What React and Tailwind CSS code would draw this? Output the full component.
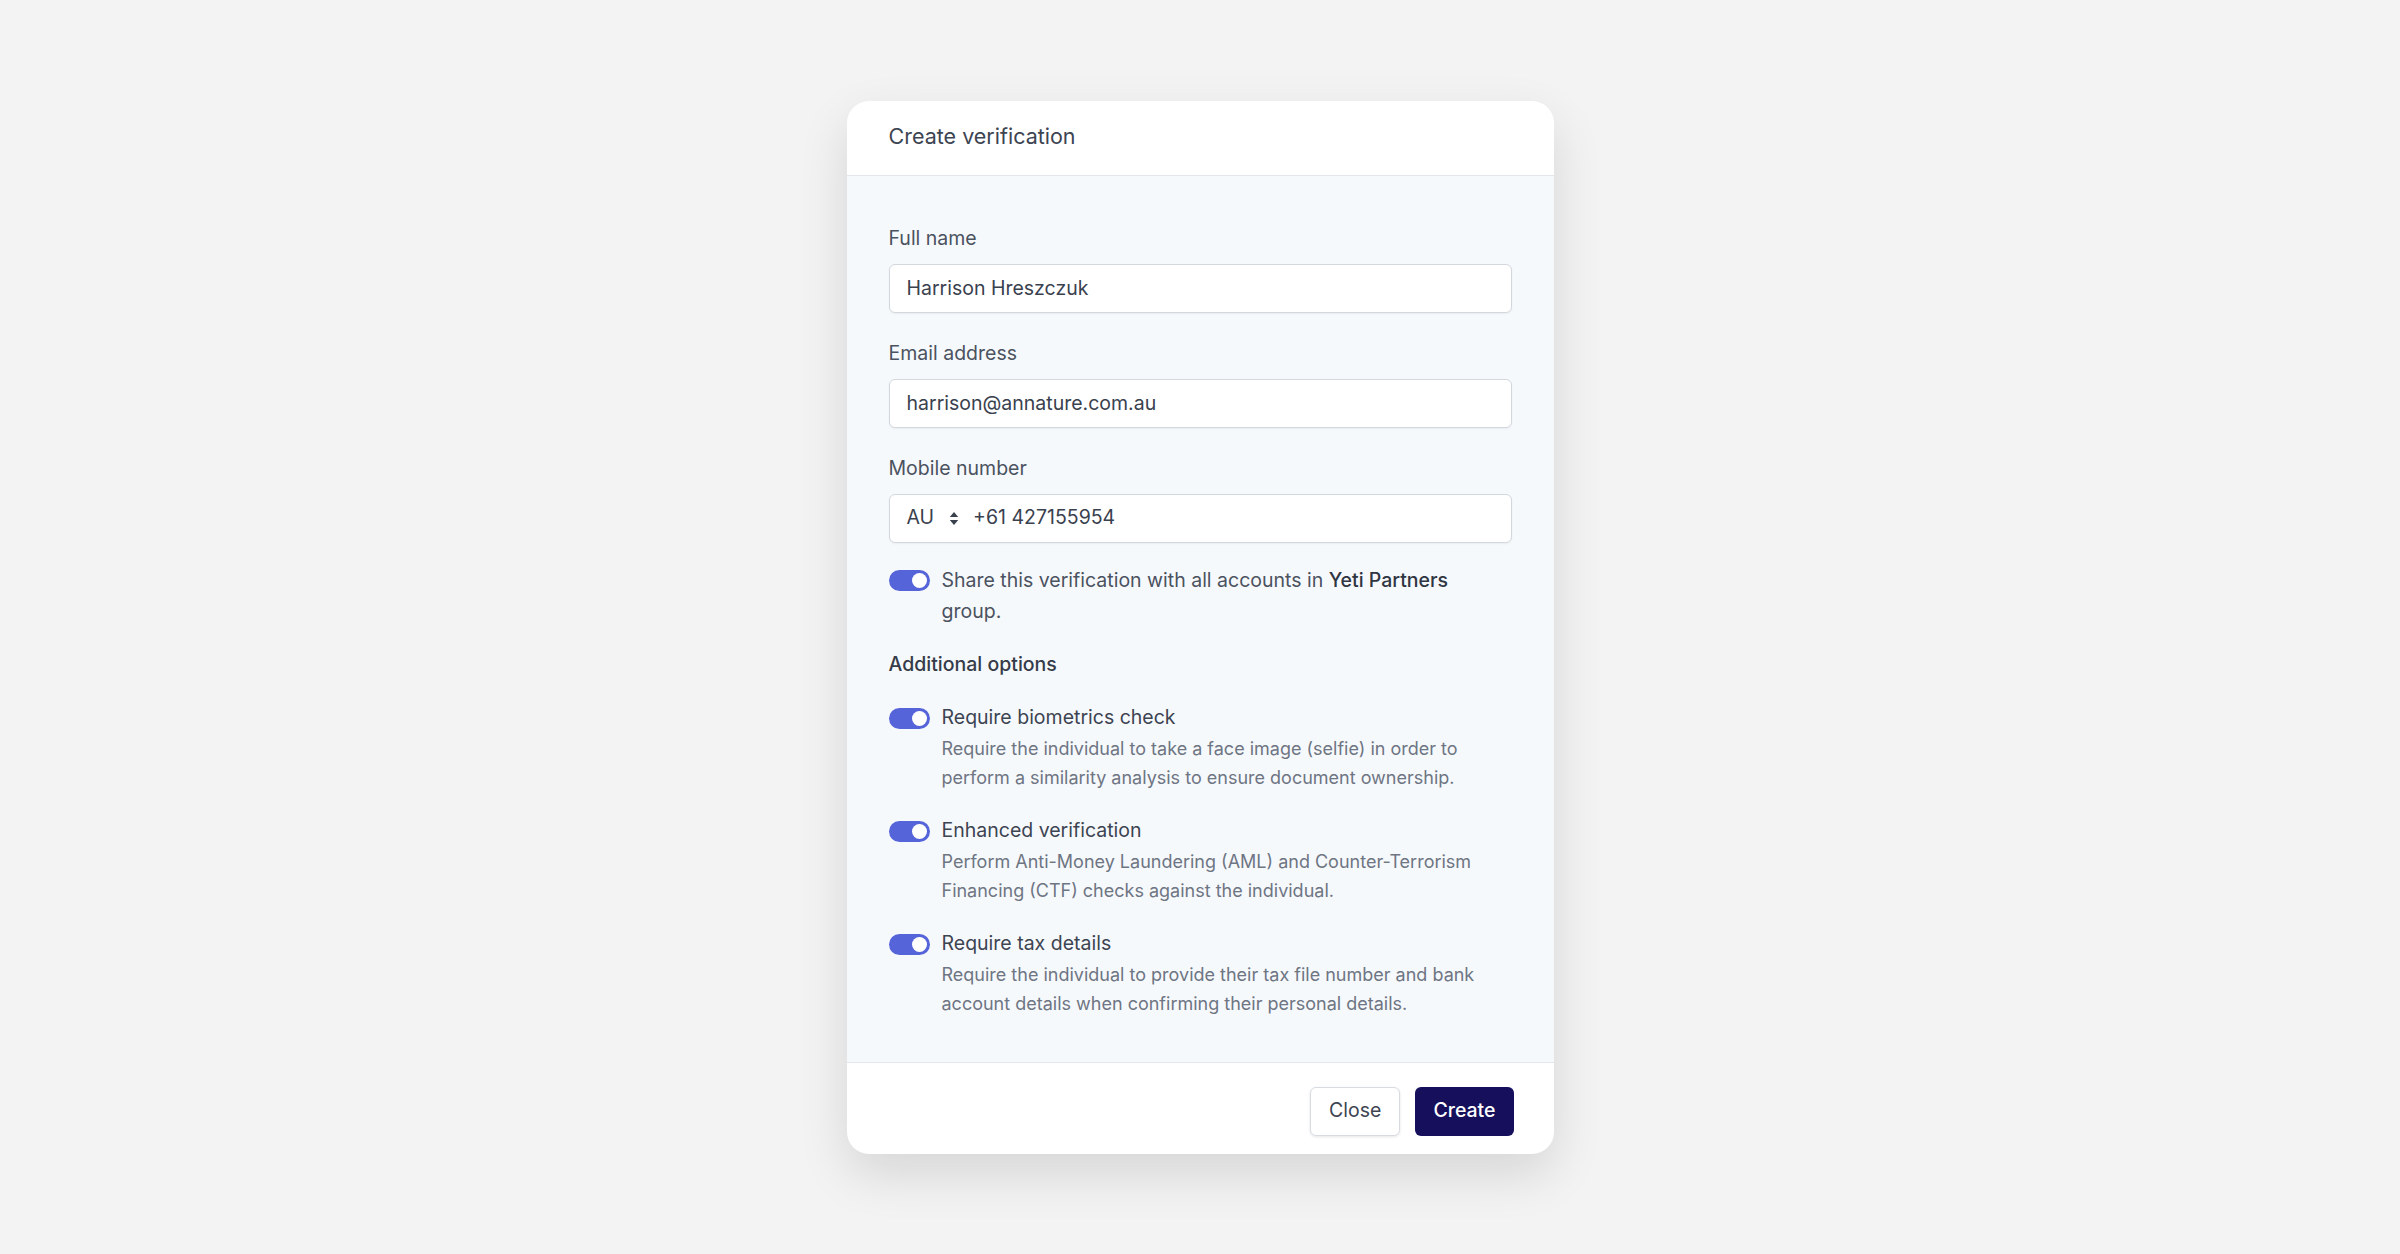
import { useState } from 'react';

const Toggle = ({ on, onChange }) => (
  <button
    type="button"
    onClick={onChange}
    className={`relative mt-[5px] flex h-[21px] w-[41px] shrink-0 items-center rounded-full px-[3px] ${
      on ? 'justify-end bg-[#5664d9]' : 'justify-start bg-[#d1d5db]'
    }`}
  >
    <span className="h-[15px] w-[15px] rounded-full bg-white" />
  </button>
);

const Field = ({ label, children }) => (
  <div className="flex flex-col">
    <label className="text-[19.5px] leading-[26px] text-[#4b5260]">{label}</label>
    <div className="mt-[13px]">{children}</div>
  </div>
);

const inputClass =
  'h-[49px] w-full rounded-[6px] border border-[#d3d7de] bg-white px-[17px] text-[19.5px] text-[#3a414e] shadow-[0_1px_2px_rgba(0,0,0,0.05)] outline-none';

const App = () => {
  const [share, setShare] = useState(true);
  const [options, setOptions] = useState({ biometrics: true, enhanced: true, tax: true });

  const optionList = [
    {
      key: 'biometrics',
      title: 'Require biometrics check',
      desc: 'Require the individual to take a face image (selfie) in order to perform a similarity analysis to ensure document ownership.',
    },
    {
      key: 'enhanced',
      title: 'Enhanced verification',
      desc: 'Perform Anti-Money Laundering (AML) and Counter-Terrorism Financing (CTF) checks against the individual.',
    },
    {
      key: 'tax',
      title: 'Require tax details',
      desc: 'Require the individual to provide their tax file number and bank account details when confirming their personal details.',
    },
  ];

  return (
    <div className="flex min-h-screen items-center justify-center bg-[#f3f3f3] font-['Inter',sans-serif]">
      <div className="w-[707px] overflow-hidden rounded-[22px] bg-white shadow-[0_20px_50px_rgba(0,0,0,0.12)]">
        <div className="flex h-[75px] items-center border-b border-[#e3e7ec] px-[42px]">
          <h2 className="-mt-[2px] text-[21.5px] text-[#3d4452]">Create verification</h2>
        </div>

        <div className="flex flex-col bg-[#f6f9fc] px-[42px] pb-[43px] pt-[49px]">
          <Field label="Full name">
            <input className={inputClass} defaultValue="Harrison Hreszczuk" />
          </Field>
          <div className="mt-[27px]">
            <Field label="Email address">
              <input className={inputClass} defaultValue="harrison@annature.com.au" />
            </Field>
          </div>
          <div className="mt-[27px]">
            <Field label="Mobile number">
              <div className="flex h-[49px] w-full items-center rounded-[6px] border border-[#d3d7de] bg-white px-[17px] text-[19.5px] text-[#3a414e] shadow-[0_1px_2px_rgba(0,0,0,0.05)]">
                <span>AU</span>
                <svg viewBox="0 0 10 16" className="ml-[15px] h-[15px] w-[10px] fill-[#3a414e]">
                  <path d="M5 1 L9.5 6.5 H0.5 Z" />
                  <path d="M5 15 L9.5 9.5 H0.5 Z" />
                </svg>
                <span className="ml-[14px]">+61 427155954</span>
              </div>
            </Field>
          </div>

          <div className="mt-[22px] flex items-start gap-[12px]">
            <Toggle on={share} onChange={() => setShare(!share)} />
            <p className="text-[19.5px] leading-[31px] text-[#4b5260]">
              Share this verification with all accounts in{' '}
              <span className="font-medium text-[#2f3542]">Yeti Partners</span> group.
            </p>
          </div>

          <h3 className="mt-[24px] text-[19.5px] font-medium leading-[26px] text-[#353b48]">
            Additional options
          </h3>

          <div className="mt-[26px] flex flex-col gap-[23px]">
            {optionList.map((opt) => (
              <div key={opt.key} className="flex items-start gap-[12px]">
                <Toggle
                  on={options[opt.key]}
                  onChange={() => setOptions({ ...options, [opt.key]: !options[opt.key] })}
                />
                <div className="flex flex-col">
                  <span className="text-[19.5px] leading-[28px] text-[#3d4452]">{opt.title}</span>
                  <span className="mt-[3px] text-[18px] leading-[29.5px] text-[#6e7583]">{opt.desc}</span>
                </div>
              </div>
            ))}
          </div>
        </div>

        <div className="flex justify-end gap-[15px] border-t border-[#e3e7ec] px-[40px] pb-[18px] pt-[24px]">
          <button className="h-[49px] rounded-[6px] border border-[#d8dce2] bg-white px-[18px] text-[19.5px] text-[#3d4452] shadow-[0_1px_3px_rgba(0,0,0,0.1)]">
            Close
          </button>
          <button className="h-[49px] rounded-[6px] bg-[#160f5b] px-[18px] text-[19.5px] font-medium text-white">
            Create
          </button>
        </div>
      </div>
    </div>
  );
};

export default App;
